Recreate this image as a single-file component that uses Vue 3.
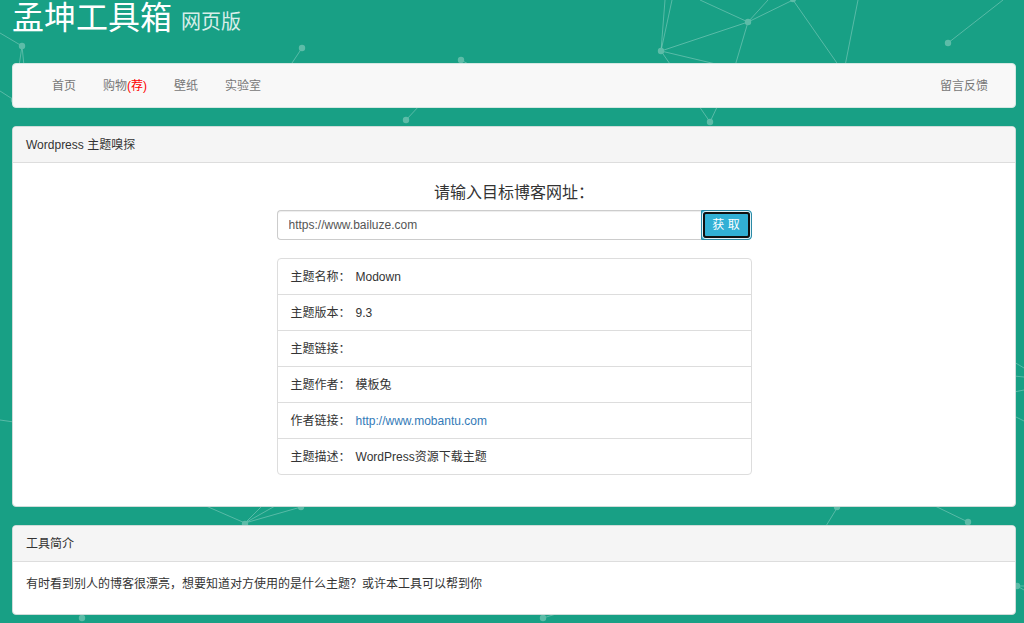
<script setup>
import { ref } from 'vue'

const url = ref('https://www.bailuze.com')

const navItems = [
  { text: '首页' },
  { text: '购物', hot: '(荐)' },
  { text: '壁纸' },
  { text: '实验室' },
]

const results = [
  { label: '主题名称：', value: 'Modown' },
  { label: '主题版本：', value: '9.3' },
  { label: '主题链接：', value: '' },
  { label: '主题作者：', value: '模板兔' },
  { label: '作者链接：', value: 'http://www.mobantu.com', link: true },
  { label: '主题描述：', value: 'WordPress资源下载主题' },
]

const lines = [
  [0, 33, 22, 46], [22, 46, 19, 66], [22, 46, 24, 66], [0, 91, 14, 100],
  [302, 48, 290, 66], [461, 60, 472, 66], [406, 120, 420, 105],
  [661, 51, 665, 0], [661, 51, 672, 0], [661, 51, 748, 22], [661, 51, 720, 65],
  [661, 51, 710, 122], [748, 22, 700, 0], [748, 22, 768, 0], [748, 22, 793, 0],
  [748, 22, 735, 66], [793, 0, 839, 66], [858, 0, 845, 66], [948, 43, 1003, 0],
  [710, 122, 718, 105], [245, 523, 206, 506], [245, 523, 262, 506],
  [245, 523, 275, 506], [245, 523, 301, 507], [543, 618, 556, 614],
  [837, 508, 826, 526], [968, 522, 935, 506], [1017, 586, 1024, 586],
  [1017, 586, 1024, 590], [0, 420, 14, 422], [1014, 362, 1024, 368],
  [1014, 376, 1024, 377], [1014, 392, 1024, 390], [1014, 416, 1024, 421],
]

const dots = [
  [22, 46], [14, 100], [28, 105], [302, 48], [461, 60], [406, 120], [661, 51],
  [748, 22], [793, -1], [948, 43], [710, 122], [245, 524], [301, 507],
  [82, 618], [543, 618], [837, 507], [968, 522], [1017, 586],
]
</script>

<template>
  <div class="page">
    <svg class="network" viewBox="0 0 1024 623" preserveAspectRatio="xMidYMin slice" aria-hidden="true">
      <g stroke="#fff" stroke-opacity="0.28" stroke-width="1">
        <line v-for="(l, i) in lines" :key="i" :x1="l[0]" :y1="l[1]" :x2="l[2]" :y2="l[3]" />
      </g>
      <g fill="#5dbca8">
        <circle v-for="(d, i) in dots" :key="i" :cx="d[0]" :cy="d[1]" r="3.2" />
      </g>
    </svg>

    <header>
      <h1>孟坤工具箱 <small>网页版</small></h1>
    </header>

    <nav class="navbar">
      <ul>
        <li v-for="item in navItems" :key="item.text">
          <a href="#">{{ item.text }}<span v-if="item.hot" class="hot">{{ item.hot }}</span></a>
        </li>
      </ul>
      <a href="#">留言反馈</a>
    </nav>

    <main>
      <section class="panel">
        <h2>Wordpress 主题嗅探</h2>
        <div class="sniffer">
          <form @submit.prevent>
            <label for="url">请输入目标博客网址：</label>
            <div class="group">
              <input id="url" v-model="url" type="text">
              <button type="submit">获 取</button>
            </div>
          </form>
          <dl>
            <div v-for="row in results" :key="row.label" class="row">
              <dt>{{ row.label }}</dt>
              <dd>
                <a v-if="row.link" :href="row.value">{{ row.value }}</a>
                <template v-else>{{ row.value }}</template>
              </dd>
            </div>
          </dl>
        </div>
      </section>

      <section class="panel">
        <h2>工具简介</h2>
        <p>有时看到别人的博客很漂亮，想要知道对方使用的是什么主题？或许本工具可以帮到你</p>
      </section>
    </main>
  </div>
</template>

<style>
body {
  margin: 0;
  background: #18a085;
}
</style>

<style scoped>
* {
  box-sizing: border-box;
}

.page {
  position: relative;
  min-height: 100vh;
  padding: 0 8px 8px 12px;
  overflow: hidden;
  font: 12px/18px "Liberation Sans", "Noto Sans CJK SC", sans-serif;
  color: #333;
}

.network {
  position: absolute;
  inset: 0;
  width: 100%;
  height: 100%;
}

header,
.navbar,
main {
  position: relative;
}

h1 {
  margin: 0 0 27px;
  font-size: 32px;
  font-weight: 400;
  line-height: 36px;
  color: #fff;
}

h1 small {
  font-size: 20px;
  line-height: 20px;
  color: #d8eee9;
}

.navbar {
  display: flex;
  justify-content: space-between;
  align-items: center;
  height: 45px;
  margin-bottom: 18px;
  padding: 0 27px 0 39px;
  background: #f8f8f8;
  border: 1px solid #d5e8e3;
  border-radius: 4px;
}

.navbar ul {
  display: flex;
  gap: 27px;
  margin: 0;
  padding: 0;
  list-style: none;
}

.navbar a {
  color: #777;
  text-decoration: none;
}

.navbar .hot {
  color: #f00;
}

.panel {
  margin-bottom: 18px;
  background: #fff;
  border: 1px solid #cfdcd9;
  border-radius: 4px;
}

.panel:last-child {
  margin-bottom: 0;
}

.panel h2 {
  margin: 0;
  padding: 9px 13px 8px;
  font-size: 12px;
  font-weight: 400;
  line-height: 18px;
  background: #f5f5f5;
  border-bottom: 1px solid #ddd;
  border-radius: 3px 3px 0 0;
}

.panel p {
  margin: 0;
  padding: 13px 13px 21px;
}

.sniffer {
  width: 50%;
  margin: 0 auto;
  padding: 18px 13px 31px;
}

form label {
  display: block;
  margin-bottom: 5px;
  font-size: 16px;
  line-height: 24px;
  text-align: center;
}

.group {
  display: flex;
  height: 30px;
  margin-bottom: 18px;
}

input {
  flex: 1;
  min-width: 0;
  padding: 0 11px;
  font: inherit;
  color: #555;
  background: #fff;
  border: 1px solid #ccc;
  border-right: 0;
  border-radius: 4px 0 0 4px;
  box-shadow: inset 0 1px 1px rgba(0, 0, 0, 0.075);
}

button {
  position: relative;
  width: 51px;
  padding: 0;
  font: inherit;
  color: #fff;
  background: #31b0d5;
  border: 1px solid #2b8aa6;
  border-radius: 0 4px 4px 0;
}

button::after {
  content: "";
  position: absolute;
  inset: 1px;
  border: 2px solid #101010;
  border-radius: 3px;
  box-shadow: 0 0 0 1px #e4f2f6;
}

dl {
  margin: 0;
  border: 1px solid #ddd;
  border-radius: 4px;
}

.row {
  display: flex;
  gap: 5px;
  padding: 9px 13px 8px;
  border-bottom: 1px solid #ddd;
}

.row:last-child {
  border-bottom: 0;
}

dt {
  min-width: 60px;
}

dd {
  margin: 0;
}

dd a {
  color: #337ab7;
  text-decoration: none;
}
</style>
